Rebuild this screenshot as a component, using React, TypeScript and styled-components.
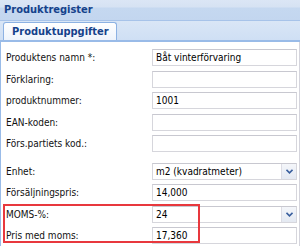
import React from "react";
import styled, { createGlobalStyle } from "styled-components";

const Global = createGlobalStyle`
  html, body { margin: 0; padding: 0; background: #fff; }
  body { width: 300px; height: 246px; overflow: hidden; }
  * { box-sizing: border-box; }
`;

const font = `"DejaVu Sans Condensed", "Liberation Sans", sans-serif`;

const Panel = styled.div`
  width: 300px;
  height: 246px;
  display: flex;
  flex-direction: column;
  font-family: ${font};
  font-size: 10px;
  color: #000;
`;

const Header = styled.div`
  height: 21px;
  flex: none;
  display: flex;
  align-items: center;
  padding-left: 4px;
  padding-bottom: 1px;
  background: linear-gradient(#dbe6f5 0px, #d6e2f3 7px, #c5d8f0 8px, #c3d6ef 100%);
  border-bottom: 1px solid #a7c3e9;
  color: #15428b;
  font-weight: bold;
  font-size: 11px;
`;

const TabStrip = styled.div`
  height: 21px;
  flex: none;
  display: flex;
  align-items: flex-end;
  padding-left: 3px;
  background: linear-gradient(#d9e6f6, #cfdff4);
  border-bottom: 2px solid #99bbe8;
`;

const Tab = styled.div`
  height: 18px;
  display: flex;
  align-items: center;
  padding: 0 7px 0 8px;
  background: linear-gradient(#ffffff, #eef4fc);
  border: 1px solid #8db2e3;
  border-bottom: none;
  border-radius: 3px 3px 0 0;
  color: #15428b;
  font-weight: bold;
  font-size: 11px;
`;

const Body = styled.div`
  position: relative;
  flex: 1;
  background: #fff;
  border-left: 1px solid #99bbe8;
  border-right: 1px solid #d4d4dc;
  padding-top: 5px;
  display: flex;
  flex-direction: column;
`;

const Row = styled.div<{ $gapBefore?: number }>`
  display: grid;
  grid-template-columns: 151px 145px;
  align-items: center;
  height: 21.5px;
  margin-top: ${(p) => p.$gapBefore ?? 0}px;
`;

const Label = styled.div`
  padding-left: 5px;
  white-space: nowrap;
  color: #111;
`;

const Field = styled.div`
  height: 17px;
  border: 1px solid #d6d6dc;
  border-top-color: #c8c8d0;
  background: #fff;
  display: flex;
  align-items: center;
  padding-left: 3px;
  white-space: nowrap;
  position: relative;
`;

const SelectField = styled(Field)`
  padding-right: 0;
  justify-content: space-between;
`;

const Trigger = styled.div`
  width: 15px;
  height: 15px;
  border-left: 1px solid #dcdce4;
  background: linear-gradient(#f4f6fa, #e4e9f2);
  display: flex;
  align-items: center;
  justify-content: center;
`;

const Highlight = styled.div`
  position: absolute;
  left: 2px;
  top: 162px;
  width: 197px;
  height: 39px;
  border: 2px solid #e8383d;
  pointer-events: none;
`;

const Chevron = () => (
  <svg width="7" height="5" viewBox="0 0 7 5">
    <path d="M0.5 0.8 L3.5 3.8 L6.5 0.8" fill="none" stroke="#3a5f9e" strokeWidth="1.6" />
  </svg>
);

type R = { label: string; value?: string; select?: boolean; gap?: number };

const rows: R[] = [
  { label: "Produktens namn *:", value: "Båt vinterförvaring" },
  { label: "Förklaring:" },
  { label: "produktnummer:", value: "1001" },
  { label: "EAN-koden:" },
  { label: "Förs.partiets kod.:" },
  { label: "Enhet:", value: "m2 (kvadratmeter)", select: true, gap: 6 },
  { label: "Försäljningspris:", value: "14,000" },
  { label: "MOMS-%:", value: "24", select: true },
  { label: "Pris med moms:", value: "17,360" },
];

export default function App() {
  return (
    <>
      <Global />
      <Panel>
        <Header>Produktregister</Header>
        <TabStrip>
          <Tab>Produktuppgifter</Tab>
        </TabStrip>
        <Body>
          {rows.map((r) => (
            <Row key={r.label} $gapBefore={r.gap}>
              <Label>{r.label}</Label>
              {r.select ? (
                <SelectField>
                  <span>{r.value}</span>
                  <Trigger>
                    <Chevron />
                  </Trigger>
                </SelectField>
              ) : (
                <Field>{r.value}</Field>
              )}
            </Row>
          ))}
          <Highlight />
        </Body>
      </Panel>
    </>
  );
}
